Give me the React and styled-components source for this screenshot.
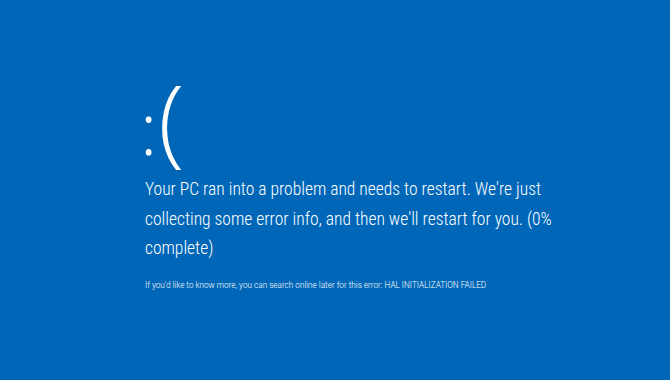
import React from "react";
import styled, { createGlobalStyle } from "styled-components";

const Global = createGlobalStyle`
  html, body { margin: 0; padding: 0; background: #0067b8; }
  body { width: 670px; height: 380px; overflow: hidden; }
`;

const Screen = styled.main`
  box-sizing: border-box;
  width: 670px;
  height: 380px;
  background: #0067b8;
  color: #ffffff;
  font-family: "Roboto", "Open Sans", sans-serif;
  padding: 70px 0 0 140px;
  display: flex;
  flex-direction: column;
`;

const Face = styled.div`
  display: flex;
  align-items: baseline;
  height: 105px;
  font-family: "Open Sans", sans-serif;
  font-weight: 300;
  gap: 1px;
`;

const Glyph = styled.span`
  font-size: ${(p) => p.$size}px;
  line-height: 1;
`;

const Message = styled.p`
  margin: 0;
  font-size: 17.5px;
  font-weight: 300;
  font-stretch: 87.5%;
  line-height: 29.5px;
  width: 412px;
  padding-left: 5px;
`;

const Detail = styled.p`
  margin: 15.5px 0 0 0;
  padding-left: 5px;
  font-size: 8.2px;
  font-weight: 300;
  line-height: 12px;
  white-space: nowrap;
`;

export default function App() {
  return (
    <>
      <Global />
      <Screen>
        <Face>
          <Glyph $size={72}>:</Glyph>
          <Glyph $size={96}>(</Glyph>
        </Face>
        <Message>
          Your PC ran into a problem and needs to restart. We're just collecting some
          error info, and then we'll restart for you. (0% complete)
        </Message>
        <Detail>
          If you'd like to know more, you can search online later for this error: HAL
          INITIALIZATION FAILED
        </Detail>
      </Screen>
    </>
  );
}
